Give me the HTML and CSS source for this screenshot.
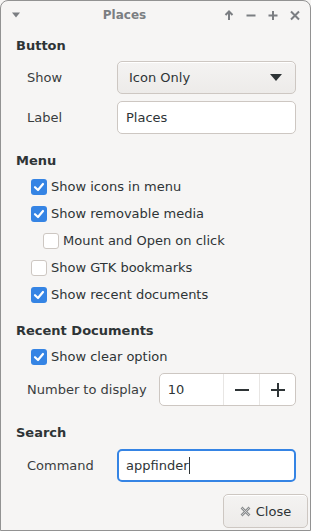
FILE: index.html
```html
<!DOCTYPE html>
<html lang="en">
<head>
    <meta charset="UTF-8">
    <meta name="viewport" content="width=device-width, initial-scale=1.0">
    <title>Places</title>
    <link rel="stylesheet" href="styles.css">
</head>
<body>

<div class="window">
    <!-- Title bar -->
    <div class="titlebar">
        <div class="tb-left">
            <svg width="10" height="6" viewBox="0 0 10 6"><path d="M1 0.5 L9 0.5 L5 5.5 Z" fill="#7b7e82"/></svg>
        </div>
        <div class="tb-title">Places</div>
        <div class="tb-buttons">
            <svg width="12" height="12" viewBox="0 0 12 12"><path d="M6 11 V2.5 M2.5 6 L6 2.5 L9.5 6" stroke="#7b7e82" stroke-width="2" fill="none"/></svg>
            <svg width="12" height="12" viewBox="0 0 12 12"><path d="M1.5 6.5 H10.5" stroke="#7b7e82" stroke-width="2"/></svg>
            <svg width="12" height="12" viewBox="0 0 12 12"><path d="M1.5 6.5 H10.5 M6 2 V11" stroke="#7b7e82" stroke-width="2"/></svg>
            <svg width="12" height="12" viewBox="0 0 12 12"><path d="M2 2.5 L10 10.5 M10 2.5 L2 10.5" stroke="#7b7e82" stroke-width="2"/></svg>
        </div>
    </div>

    <div class="content">
        <!-- Button section -->
        <h3 class="heading first">Button</h3>
        <div class="form-row">
            <span class="label">Show</span>
            <div class="combo">
                <span>Icon Only</span>
                <svg width="12" height="7" viewBox="0 0 12 7"><path d="M0 0 H12 L6 7 Z" fill="#2e3436"/></svg>
            </div>
        </div>
        <div class="form-row">
            <span class="label">Label</span>
            <div class="entry">Places</div>
        </div>

        <!-- Menu section -->
        <h3 class="heading">Menu</h3>
        <div class="check-list">
            <div class="check"><span class="box on"></span>Show icons in menu</div>
            <div class="check"><span class="box on"></span>Show removable media</div>
            <div class="check sub"><span class="box"></span>Mount and Open on click</div>
            <div class="check"><span class="box"></span>Show GTK bookmarks</div>
            <div class="check"><span class="box on"></span>Show recent documents</div>
        </div>

        <!-- Recent documents section -->
        <h3 class="heading recent">Recent Documents</h3>
        <div class="check-list">
            <div class="check"><span class="box on"></span>Show clear option</div>
        </div>
        <div class="form-row number">
            <span class="label">Number to display</span>
            <div class="spin">
                <span class="spin-value">10</span>
                <span class="spin-btn">
                    <svg width="16" height="16" viewBox="0 0 16 16"><path d="M1 8 H15" stroke="#2e3436" stroke-width="2"/></svg>
                </span>
                <span class="spin-btn">
                    <svg width="16" height="16" viewBox="0 0 16 16"><path d="M1 8 H15 M8 1 V15" stroke="#2e3436" stroke-width="2"/></svg>
                </span>
            </div>
        </div>

        <!-- Search section -->
        <h3 class="heading">Search</h3>
        <div class="form-row">
            <span class="label">Command</span>
            <div class="entry focus">appfinder<span class="caret"></span></div>
        </div>
    </div>

    <div class="actions">
        <div class="button">
            <svg width="11" height="11" viewBox="0 0 11 11"><path d="M1.5 1.5 L9.5 9.5 M9.5 1.5 L1.5 9.5" stroke="#8a8d8f" stroke-width="2.6"/><path d="M1.5 1.5 L9.5 9.5 M9.5 1.5 L1.5 9.5" stroke="#d9d9d9" stroke-width="0.8"/></svg>
            Close
        </div>
    </div>
</div>

</body>
</html>
```

FILE: styles.css
```css
/* Base page */
body {
    margin: 0;
    font-family: "DejaVu Sans", Verdana, sans-serif;
    font-size: 13px;
    color: #2e3436;
    background: #f6f5f4;
}

/* Window frame */
.window {
    width: 311px;
    height: 531px;
    box-sizing: border-box;
    border: 1px solid #929292;
    border-radius: 8px 8px 0 0;
    background: #f6f5f4;
    display: flex;
    flex-direction: column;
}

/* Title bar */
.titlebar {
    height: 27px;
    display: flex;
    align-items: center;
}

.tb-left {
    width: 30px;
    padding-left: 10px;
    box-sizing: border-box;
    display: flex;
    align-items: center;
}

.tb-title {
    flex: 1;
    text-align: center;
    font-size: 12px;
    font-weight: bold;
    color: #7b7e82;
}

.tb-buttons {
    width: 92px;
    display: flex;
    align-items: center;
    gap: 10px;
    padding-left: 5px;
    box-sizing: border-box;
}

/* Main content */
.content {
    padding: 0 14px 0 15px;
}

.heading {
    margin: 18px 0 0 0;
    font-size: 13px;
    line-height: 18px;
    font-weight: bold;
    color: #2e3436;
}

.heading.first {
    margin-top: 9px;
    margin-bottom: 6px;
}

.heading.recent {
    margin-top: 14px;
}

/* Label + control rows */
.form-row {
    display: flex;
    align-items: center;
    margin-top: 7px;
}

.heading.first + .form-row {
    margin-top: 0;
}

.label {
    width: 101px;
    padding-left: 11px;
    box-sizing: border-box;
    color: #3a3d3e;
}

.combo, .entry {
    flex: 1;
    height: 33px;
    box-sizing: border-box;
    border: 1px solid #cdc7c2;
    border-radius: 5px;
    display: flex;
    align-items: center;
}

.combo {
    justify-content: space-between;
    padding: 0 13px 0 11px;
    background: linear-gradient(#f4f3f2, #edebe9);
    box-shadow: inset 0 1px #ffffff;
}

.entry {
    padding-left: 8px;
    background: #ffffff;
}

.entry.focus {
    border: 2px solid #3584e4;
    padding-left: 7px;
}

.caret {
    display: inline-block;
    width: 1px;
    height: 17px;
    background: #2e3436;
}

/* Checkboxes */
.check-list {
    margin-top: 3px;
}

.check {
    height: 27px;
    display: flex;
    align-items: center;
    padding-left: 15px;
    color: #2e3436;
}

.check.sub {
    padding-left: 27px;
}

.box {
    width: 16px;
    height: 16px;
    box-sizing: border-box;
    border: 1px solid #cdc7c2;
    border-radius: 3px;
    background: #ffffff;
    margin-right: 4px;
}

.box.on {
    border: none;
    background: #3584e4 url("data:image/svg+xml;utf8,<svg xmlns='http://www.w3.org/2000/svg' width='16' height='16'><path d='M4 8.2 L7 11 L12 5' stroke='white' stroke-width='2.2' fill='none' stroke-linecap='round' stroke-linejoin='round'/></svg>") no-repeat center;
}

/* Spin button */
.form-row.number {
    margin-top: 3px;
}

.form-row.number .label {
    width: auto;
    margin-right: 12px;
}

.spin {
    flex: 1;
    height: 33px;
    box-sizing: border-box;
    display: flex;
    border: 1px solid #cdc7c2;
    border-radius: 5px;
    background: #ffffff;
}

.spin-value {
    flex: 1;
    display: flex;
    align-items: center;
    padding-left: 8px;
}

.spin-btn {
    width: 35px;
    display: flex;
    align-items: center;
    justify-content: center;
    border-left: 1px solid #e8e6e4;
}

/* Bottom action area */
.actions {
    margin-top: auto;
    display: flex;
    justify-content: flex-end;
    padding: 0 2px 2px 0;
}

.button {
    width: 85px;
    height: 34px;
    box-sizing: border-box;
    border: 1px solid #cdc7c2;
    border-radius: 5px;
    background: linear-gradient(#f4f3f2, #edebe9);
    box-shadow: inset 0 1px #ffffff;
    display: flex;
    align-items: center;
    justify-content: center;
    gap: 5px;
    color: #2e3436;
}
```
